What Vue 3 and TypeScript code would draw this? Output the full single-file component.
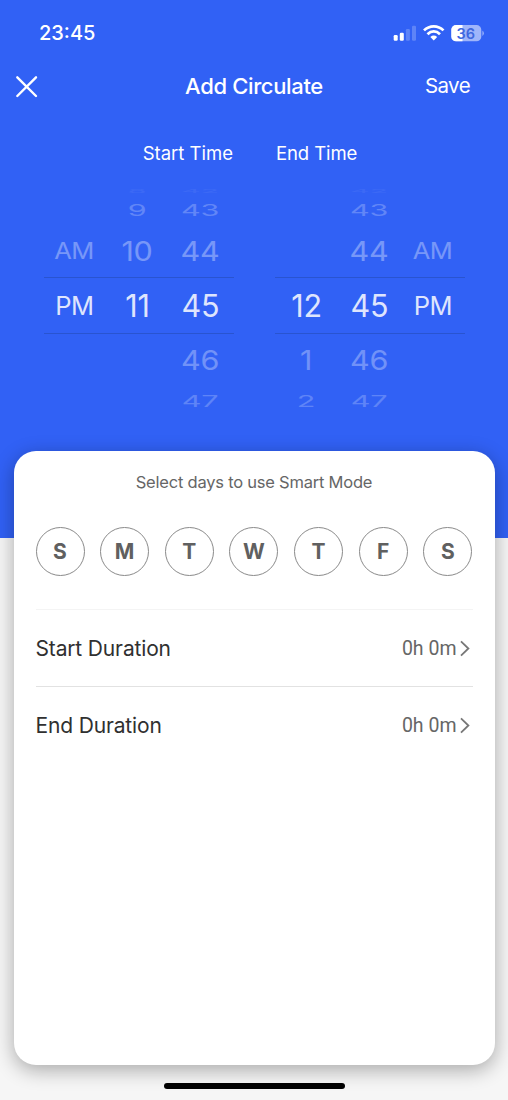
<script setup lang="ts">
interface WheelRow { text: string; level: number }
interface WheelColumn { id: string; period?: boolean; rows: WheelRow[] }

const rows = (values: string[]): WheelRow[] =>
  values.map((text, i) => ({ text, level: i - 3 }))

const startWheels: WheelColumn[] = [
  { id: 'period', period: true, rows: rows(['', '', 'AM', 'PM', '', '']) },
  { id: 'hour', rows: rows(['8', '9', '10', '11', '', '']) },
  { id: 'minute', rows: rows(['42', '43', '44', '45', '46', '47']) },
]
const endWheels: WheelColumn[] = [
  { id: 'hour', rows: rows(['', '', '', '12', '1', '2']) },
  { id: 'minute', rows: rows(['42', '43', '44', '45', '46', '47']) },
  { id: 'period', period: true, rows: rows(['', '', 'AM', 'PM', '', '']) },
]
const pickers = [
  { id: 'start', label: 'Start Time', wheels: startWheels },
  { id: 'end', label: 'End Time', wheels: endWheels },
]
const levelNames = ['up3', 'up2', 'up1', 'current', 'down1', 'down2']
const levelClass = (level: number): string => levelNames[level + 3]

const days = ['S', 'M', 'T', 'W', 'T', 'F', 'S']
const durations = [
  { id: 'start', label: 'Start Duration', value: '0h 0m' },
  { id: 'end', label: 'End Duration', value: '0h 0m' },
]
</script>

<template>
  <main class="screen">
    <section class="hero">
      <header class="status">
        <span class="clock">23:45</span>
        <svg class="indicators" width="92" height="20" viewBox="0 0 92 20">
          <g fill="#fff">
            <rect x="1.700" y="11" width="4" height="5.800" rx="1.2" />
            <rect x="7.800" y="8.700" width="4" height="8.100" rx="1.2" />
            <g opacity=".22">
              <rect x="13.900" y="5" width="4" height="11.800" rx="1.2" />
              <rect x="20" y="1.700" width="4" height="15.100" rx="1.2" />
            </g>
          </g>
          <g fill="none" stroke="#fff" stroke-width="2.7">
            <path d="M32 6.400C37.500 .9 46 .9 51.500 6.400" />
            <path d="M35.500 10.200C39.300 6.400 44.200 6.400 48 10.200" />
          </g>
          <path d="M38.300 12.900Q41.750 10.200 45.200 12.900L41.750 16.600Z" fill="#fff" />
          <clipPath id="cell"><rect x="59.300" y="1" width="30" height="16.500" rx="4.800" /></clipPath>
          <g clip-path="url(#cell)">
            <rect x="59" y="1" width="31" height="16.500" fill="#9fb5fa" />
            <rect x="59" y="1" width="11.500" height="16.500" fill="#fff" />
          </g>
          <path d="M90.300 6.500Q92 7.500 92 9.200Q92 11 90.300 12Z" fill="#8ea8fa" />
          <text class="charge" x="73.800" y="14.500" text-anchor="middle">36</text>
        </svg>
      </header>

      <nav class="toolbar">
        <svg class="close" width="23" height="23" viewBox="0 0 23 23">
          <path d="M2.300 2.300L21 21M21 2.300L2.300 21" fill="none" stroke="#fff" stroke-width="2.400" stroke-linecap="round" />
        </svg>
        <h1 class="title">Add Circulate</h1>
        <span class="save">Save</span>
      </nav>

      <div class="pickers">
        <div v-for="picker in pickers" :key="picker.id" class="picker" :class="picker.id">
          <span class="caption">{{ picker.label }}</span>
          <div class="wheels">
            <div v-for="wheel in picker.wheels" :key="wheel.id" class="wheel" :class="{ period: wheel.period }">
              <div v-for="row in wheel.rows" :key="row.level" class="row" :class="levelClass(row.level)">
                <span>{{ row.text }}</span>
              </div>
            </div>
          </div>
        </div>
      </div>
    </section>

    <section class="card">
      <p class="hint">Select days to use Smart Mode</p>
      <div class="days">
        <span v-for="(day, i) in days" :key="i" class="day">{{ day }}</span>
      </div>
      <div class="durations">
        <div v-for="item in durations" :key="item.id" class="duration">
          <span class="name">{{ item.label }}</span>
          <span class="value">{{ item.value }}</span>
          <svg class="chevron" width="10" height="17" viewBox="0 0 10 17">
            <path d="M1 1.300L8.400 8.500L1 15.700" fill="none" stroke="#777" stroke-width="1.800" />
          </svg>
        </div>
      </div>
    </section>

    <div class="home-bar"></div>
  </main>
</template>

<style>
body {
  margin: 0;
  background: #f6f6f6;
}
</style>

<style scoped>
.screen {
  width: 508px;
  height: 1100px;
  overflow: hidden;
  background: #f6f6f6;
  font-family: Inter, "Liberation Sans", sans-serif;
  color: #fff;
  display: flex;
  flex-direction: column;
  align-items: center;
}

.hero {
  width: 508px;
  height: 538px;
  flex: none;
  background: #3161f5;
}

.status {
  height: 63px;
  padding: 0 24px 0 39px;
  box-sizing: border-box;
  display: flex;
  justify-content: space-between;
  align-items: center;
}

.clock {
  font-size: 20px;
  line-height: 24px;
  font-weight: 550;
  padding-top: 2px;
}

.indicators {
  display: block;
  padding-top: 4px;
}

.charge {
  font-size: 14.500px;
  font-weight: 600;
  fill: #3f68df;
}

.toolbar {
  height: 46px;
  padding: 0 38px 0 15px;
  display: grid;
  grid-template-columns: 120px 1fr 120px;
  align-items: center;
}

.title {
  margin: 0;
  font-size: 22px;
  font-weight: 450;
  line-height: 28px;
  letter-spacing: -0.35px;
  text-align: center;
  white-space: nowrap;
  padding-left: 23px;
}

.save {
  font-size: 20.500px;
  line-height: 26px;
  letter-spacing: -0.600px;
  text-align: right;
}

.close {
  display: block;
}

.pickers {
  display: flex;
  gap: 42px;
  padding: 31px 44px 0;
}

.picker {
  width: 190px;
}

.caption {
  display: block;
  font-size: 18.500px;
  line-height: 26px;
  white-space: nowrap;
}

.start .caption {
  text-align: right;
}

.end .caption {
  padding-left: 1px;
  letter-spacing: -0.100px;
}

.wheels {
  display: flex;
  height: 226px;
  margin-top: 20px;
}

.wheel {
  width: 63px;
  display: flex;
  flex-direction: column;
}

.row {
  font-size: 30.500px;
  font-weight: 370;
  letter-spacing: -0.200px;
  color: #fff;
  display: flex;
  align-items: center;
  justify-content: center;
  line-height: 36px;
  flex: none;
  box-sizing: border-box;
  padding-right: 3px;
}

.end .row {
  padding-right: 1px;
}

.period .row {
  font-size: 25.500px;
  letter-spacing: -0.500px;
}

.end .period .row {
  padding-right: 0;
}

.row span {
  opacity: 0.84;
}

.row.up3 {
  height: 10px;
}

.row.up3 span {
  transform: scaleY(0.16);
  opacity: 0.05;
}

.row.up2 {
  height: 28px;
}

.row.up2 span {
  transform: translateY(0.500px) scaleY(0.54);
  opacity: 0.23;
}

.row.up1 {
  height: 53px;
}

.row.up1 span {
  transform: translateY(0.500px) scaleY(0.88);
  opacity: 0.34;
}

.row.current {
  height: 57px;
  border-top: 1px solid #2954d0;
  border-bottom: 1px solid #2954d0;
  margin-right: -1px;
}

.row.down1 {
  height: 53px;
}

.row.down1 span {
  transform: translateY(-0.500px) scaleY(0.88);
  opacity: 0.31;
}

.row.down2 {
  height: 27px;
}

.row.down2 span {
  transform: scaleY(0.54);
  opacity: 0.22;
}

.card {
  width: 481px;
  height: 613.500px;
  flex: none;
  margin-top: -87px;
  box-sizing: border-box;
  padding: 19px 22px 0;
  border-radius: 22px;
  background: #fff;
  box-shadow: 0 5px 20px rgba(0, 0, 0, 0.32);
  color: #666;
}

.hint {
  margin: 0;
  font-size: 16.500px;
  line-height: 25px;
  letter-spacing: -0.220px;
  text-align: center;
  white-space: nowrap;
}

.days {
  display: flex;
  justify-content: space-between;
  margin-top: 31.500px;
}

.day {
  width: 49px;
  height: 49px;
  box-sizing: border-box;
  border: 1.500px solid #8a8a8a;
  border-radius: 50%;
  display: flex;
  align-items: center;
  justify-content: center;
  font-size: 21px;
  font-weight: 700;
  color: #606060;
  padding: 1px 0 0;
}

.durations {
  margin-top: 33.500px;
}

.duration {
  height: 76.500px;
  box-sizing: border-box;
  display: flex;
  align-items: center;
  border-top: 1px solid #f4f4f4;
  padding: 2px 3px 0 0;
}

.duration + .duration {
  border-top-color: #e2e2e2;
}

.name {
  flex: 1;
  font-size: 21px;
  letter-spacing: -0.150px;
  color: #303030;
  white-space: nowrap;
}

.value {
  font-family: Roboto, sans-serif;
  font-size: 19.500px;
  white-space: nowrap;
  margin-right: 3px;
}

.home-bar {
  width: 181px;
  height: 6.500px;
  flex: none;
  margin-top: 18px;
  border-radius: 4px;
  background: #000;
}
</style>
